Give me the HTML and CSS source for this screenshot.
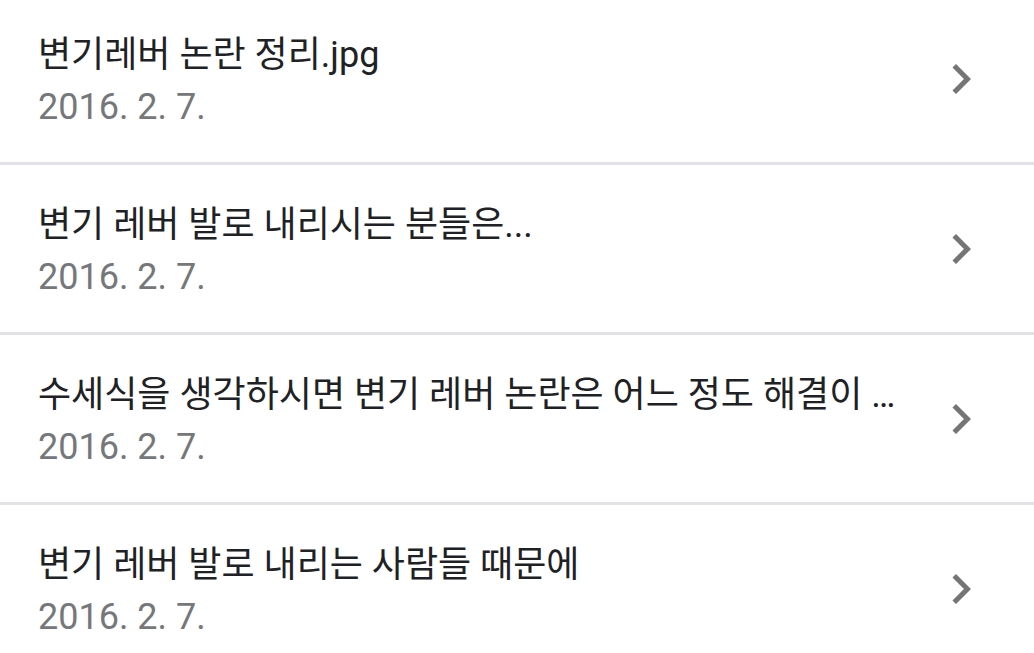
FILE: index.html
```html
<!DOCTYPE html>
<html lang="ko">
<head>
<meta charset="utf-8">
<title>목록</title>
<link rel="stylesheet" href="styles.css">
</head>
<body>
<ul class="list">
  <li class="row">
    <div class="text">
      <div class="title">변기레버 논란 정리.jpg</div>
      <div class="date">2016. 2. 7.</div>
    </div>
    <svg class="chev" viewBox="0 0 24 24"><path d="M10 6L8.59 7.41 13.17 12l-4.58 4.59L10 18l6-6z"/></svg>
  </li>
  <li class="row">
    <div class="text">
      <div class="title">변기 레버 발로 내리시는 분들은...</div>
      <div class="date">2016. 2. 7.</div>
    </div>
    <svg class="chev" viewBox="0 0 24 24"><path d="M10 6L8.59 7.41 13.17 12l-4.58 4.59L10 18l6-6z"/></svg>
  </li>
  <li class="row">
    <div class="text">
      <div class="title">수세식을 생각하시면 변기 레버 논란은 어느 정도 해결이 …</div>
      <div class="date">2016. 2. 7.</div>
    </div>
    <svg class="chev" viewBox="0 0 24 24"><path d="M10 6L8.59 7.41 13.17 12l-4.58 4.59L10 18l6-6z"/></svg>
  </li>
  <li class="row">
    <div class="text">
      <div class="title">변기 레버 발로 내리는 사람들 때문에</div>
      <div class="date">2016. 2. 7.</div>
    </div>
    <svg class="chev" viewBox="0 0 24 24"><path d="M10 6L8.59 7.41 13.17 12l-4.58 4.59L10 18l6-6z"/></svg>
  </li>
</ul>
</body>
</html>
```

FILE: styles.css
```css
html, body {
  margin: 0;
  padding: 0;
  background: #ffffff;
  overflow: hidden;
}

.list {
  list-style: none;
  margin: -5px 0 0 0;
  padding: 0;
}

.row {
  display: flex;
  align-items: center;
  height: 167px;
  border-bottom: 3px solid #e1e1e6;
  padding: 0 43px 0 38px;
}

.text {
  flex: 1;
  min-width: 0;
  padding-top: 4px;
}

.title {
  font-family: Roboto, "Noto Sans CJK KR", sans-serif;
  font-size: 36px;
  line-height: 52px;
  color: #202124;
  white-space: nowrap;
}

.date {
  font-family: Roboto, "Noto Sans CJK KR", sans-serif;
  font-size: 36px;
  line-height: 52px;
  color: #75777a;
  white-space: nowrap;
}

.chev {
  width: 60px;
  height: 60px;
  flex: none;
  fill: #757575;
}
```
